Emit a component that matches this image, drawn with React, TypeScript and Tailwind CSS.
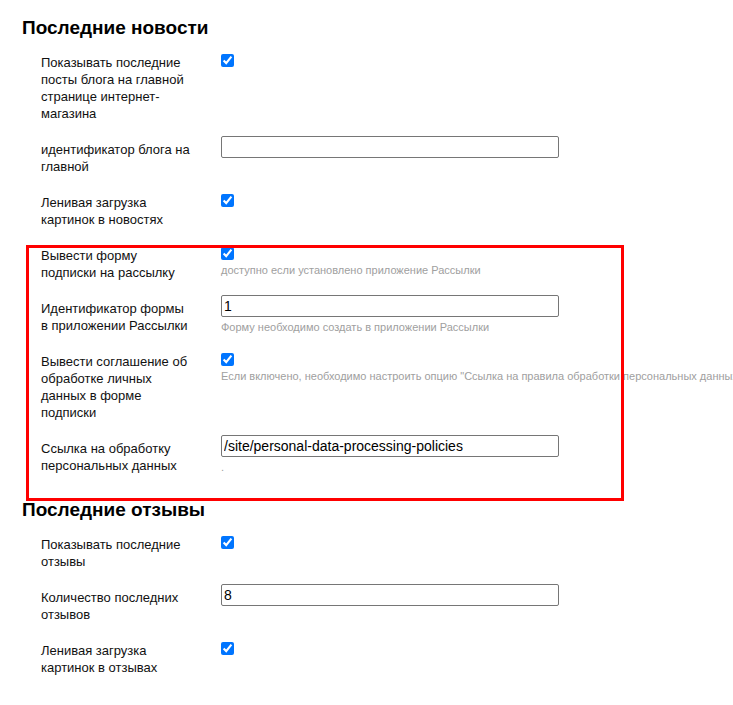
import React from "react";

const font = { fontFamily: '"Liberation Sans", Arial, sans-serif' };

function Label({ children }: { children: React.ReactNode }) {
  return (
    <div className="w-[153px] shrink-0 pt-[5px] text-[13px] leading-[17px] text-[#111]">
      {children}
    </div>
  );
}

function Hint({ children }: { children: React.ReactNode }) {
  return (
    <div className="mt-[3px] whitespace-nowrap text-[11px] leading-[14px] text-[#a0a0a0]">
      {children}
    </div>
  );
}

function CheckRow({ label, hint }: { label: React.ReactNode; hint?: React.ReactNode }) {
  return (
    <div className="mb-[14px] flex items-start pl-[41px]">
      <Label>{label}</Label>
      <div className="ml-[27px] flex flex-col pt-[5px]">
        <input type="checkbox" defaultChecked className="m-0 h-[13px] w-[13px]" />
        {hint && <Hint>{hint}</Hint>}
      </div>
    </div>
  );
}

function InputRow({ label, value, hint }: { label: React.ReactNode; value: string; hint?: React.ReactNode }) {
  return (
    <div className="mb-[14px] flex items-start pl-[41px]">
      <Label>{label}</Label>
      <div className="ml-[27px] flex flex-col">
        <input
          type="text"
          defaultValue={value}
          className="h-[22px] w-[338px] rounded-[2px] border border-[#767676] bg-white px-[2px] text-[14px] text-black outline-none"
          style={font}
        />
        {hint && <Hint>{hint}</Hint>}
      </div>
    </div>
  );
}

export default function App() {
  return (
    <div className="relative h-[705px] w-[733px] overflow-hidden bg-white" style={font}>
      <div className="pt-[17px]">
        <h2 className="mb-[10px] pl-[22px] text-[19px] font-bold leading-[22px] text-black">Последние новости</h2>
        <CheckRow label="Показывать последние посты блога на главной странице интернет-магазина" />
        <InputRow label="идентификатор блога на главной" value="" />
        <CheckRow label="Ленивая загрузка картинок в новостях" />
        <CheckRow
          label="Вывести форму подписки на рассылку"
          hint="доступно если установлено приложение Рассылки"
        />
        <InputRow
          label="Идентификатор формы в приложении Рассылки"
          value="1"
          hint="Форму необходимо создать в приложении Рассылки"
        />
        <CheckRow
          label="Вывести соглашение об обработке личных данных в форме подписки"
          hint={'Если включено, необходимо настроить опцию "Ссылка на правила обработки персональных данных"'}
        />
        <InputRow
          label="Ссылка на обработку персональных данных"
          value="/site/personal-data-processing-policies"
          hint="."
        />
        <h2 className="mb-[10px] mt-[25px] pl-[22px] text-[19px] font-bold leading-[22px] text-black">Последние отзывы</h2>
        <CheckRow label="Показывать последние отзывы" />
        <InputRow label="Количество последних отзывов" value="8" />
        <CheckRow label="Ленивая загрузка картинок в отзывах" />
      </div>
      <div className="pointer-events-none absolute left-[26px] top-[245px] h-[256px] w-[598px] border-[3px] border-[#ff0000]" />
    </div>
  );
}
